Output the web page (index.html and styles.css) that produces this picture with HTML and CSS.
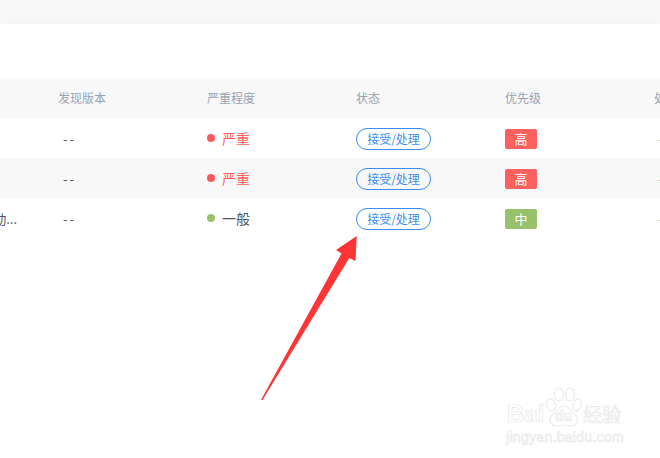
FILE: index.html
```html
<!DOCTYPE html>
<html lang="zh">
<head>
<meta charset="utf-8">
<title>缺陷列表</title>
<link rel="stylesheet" href="styles.css">
</head>
<body>
<div class="topbar"></div>
<div class="table">
  <div class="row head">
    <div class="cell"></div>
    <div class="cell">发现版本</div>
    <div class="cell">严重程度</div>
    <div class="cell">状态</div>
    <div class="cell">优先级</div>
    <div class="cell">处理人</div>
  </div>
  <div class="row">
    <div class="cell title"></div>
    <div class="cell ver">--</div>
    <div class="cell sev red"><i class="dot dot-red"></i>严重</div>
    <div class="cell"><span class="pill">接受/处理</span></div>
    <div class="cell"><span class="badge b-red">高</span></div>
    <div class="cell ver">--</div>
  </div>
  <div class="row alt">
    <div class="cell title"></div>
    <div class="cell ver">--</div>
    <div class="cell sev red"><i class="dot dot-red"></i>严重</div>
    <div class="cell"><span class="pill">接受/处理</span></div>
    <div class="cell"><span class="badge b-red">高</span></div>
    <div class="cell ver">--</div>
  </div>
  <div class="row">
    <div class="cell title">动...</div>
    <div class="cell ver">--</div>
    <div class="cell sev"><i class="dot dot-green"></i>一般</div>
    <div class="cell"><span class="pill">接受/处理</span></div>
    <div class="cell"><span class="badge b-green">中</span></div>
    <div class="cell ver">--</div>
  </div>
</div>
<svg class="arrow" width="660" height="458" viewBox="0 0 660 458" aria-hidden="true">
  <polygon fill="#fd3535" points="356.7,236 336,250 341.5,253.5 261,400 262.500,400 349.3,258 355.500,261"/>
</svg>
<div class="mark">
  <span class="mark-word">Bai</span>
  <svg class="paw" width="36" height="41" viewBox="0 0 36 41" aria-hidden="true">
    <g fill="#fff" stroke="#ececec" stroke-width="1.2">
      <ellipse cx="5" cy="18" rx="4.500" ry="6" transform="rotate(-15 5 18)"/>
      <ellipse cx="13" cy="7.500" rx="4.500" ry="6.500"/>
      <ellipse cx="24" cy="7.500" rx="4.500" ry="6.500"/>
      <ellipse cx="31" cy="18" rx="4" ry="6" transform="rotate(15 31 18)"/>
      <path d="M18 19c5 0 7 5 11 8 4 3 3 12-3 12-3 0-5-1-8-1s-5 1-8 1c-6 0-8-8-3-12 4-3 6-8 11-8z"/>
    </g>
  </svg>
  <span class="mark-du">du</span>
  <span class="mark-cn">经验</span>
  <span class="mark-url">jingyan.baidu.com</span>
</div>
</body>
</html>
```
FILE: styles.css
```css
html, body {
  margin: 0;
  padding: 0;
  width: 660px;
  height: 458px;
  overflow: hidden;
  background: #fff;
  font-family: "Noto Sans CJK SC", "Liberation Sans", sans-serif;
}
.topbar {
  height: 22px;
  background: #f8f8f8;
  box-shadow: 0 1px 2px rgba(0, 0, 0, 0.08);
}
.table {
  margin-top: 57px;
  width: 660px;
  overflow: hidden;
}
.row {
  display: grid;
  grid-template-columns: 58px repeat(5, 149px);
  height: 40px;
  align-items: center;
  font-size: 14px;
  color: #50555d;
}
.head {
  height: 39px;
  background: #f8f8f8;
  font-size: 12px;
  color: #98a2b0;
}
.head .cell {
  padding-bottom: 2px;
}
.alt {
  background: #f8f8f8;
}
.cell {
  white-space: nowrap;
  display: flex;
  align-items: center;
  min-width: 0;
  overflow: hidden;
}
.title {
  justify-content: flex-end;
  padding-right: 41px;
  font-size: 13px;
}
.ver {
  padding-left: 5px;
  letter-spacing: 2px;
  font-size: 13px;
}
.sev {
  gap: 7px;
}
.red {
  color: #ff5f5f;
}
.dot {
  width: 8px;
  height: 8px;
  border-radius: 50%;
  margin-bottom: 1px;
}
.dot-red {
  background: #fb5a5a;
}
.dot-green {
  background: #97c26a;
}
.pill {
  box-sizing: border-box;
  width: 75px;
  height: 22px;
  margin-top: 2px;
  border: 1px solid #3a8bf5;
  border-radius: 11px;
  color: #3a8bf5;
  font-size: 12px;
  line-height: 20px;
  text-align: center;
}
.badge {
  width: 32px;
  height: 20px;
  margin-top: 2px;
  border-radius: 2px;
  color: #fff;
  font-size: 13px;
  line-height: 20px;
  text-align: center;
}
.b-red {
  background: #fd6060;
}
.b-green {
  background: #97c26a;
}
.arrow {
  position: absolute;
  left: 0;
  top: 0;
}
.mark {
  position: absolute;
  left: 506px;
  top: 387px;
  width: 120px;
  height: 58px;
  color: #fff;
  -webkit-text-stroke: 0.7px #e8e8e8;
  font-family: "Liberation Sans", sans-serif;
}
.mark-word {
  position: absolute;
  left: 1px;
  top: 13px;
  font-size: 24px;
  font-weight: 700;
  line-height: 27px;
}
.paw {
  position: absolute;
  left: 40px;
  top: 0;
}
.mark-du {
  position: absolute;
  left: 49px;
  top: 21px;
  font-size: 14px;
  font-weight: 700;
  line-height: 16px;
}
.mark-cn {
  position: absolute;
  left: 77px;
  top: 15px;
  font-family: "Noto Sans CJK SC", sans-serif;
  font-size: 19px;
  line-height: 24px;
}
.mark-url {
  position: absolute;
  left: 0;
  top: 42px;
  font-size: 14px;
  line-height: 16px;
  letter-spacing: 0.3px;
  white-space: nowrap;
}
```
